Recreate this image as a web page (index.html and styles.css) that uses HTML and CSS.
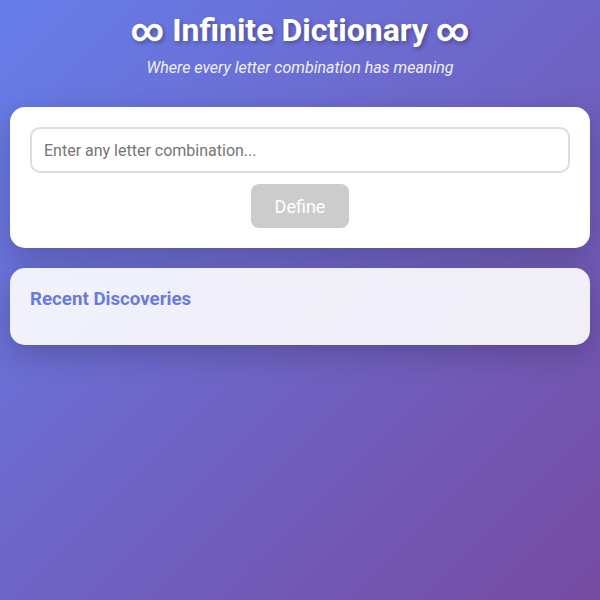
FILE: index.html
```html
<!DOCTYPE html>
<html>
<head>
<meta charset="utf-8">
<link rel="stylesheet" href="styles.css">
</head>
<body>
<div class="container">
  <header class="header">
    <h1 class="title">∞ Infinite Dictionary ∞</h1>
    <p class="subtitle">Where every letter combination has meaning</p>
  </header>
  <section class="card search-card">
    <input class="word-input" type="text" placeholder="Enter any letter combination...">
    <button class="define-btn" disabled>Define</button>
  </section>
  <section class="card recent-card">
    <h3 class="recent-title">Recent Discoveries</h3>
  </section>
</div>
</body>
</html>
```
FILE: styles.css
```css
html, body {
  margin: 0;
  height: 100%;
}
body {
  font-family: Roboto, "Liberation Sans", sans-serif;
  background: linear-gradient(135deg, #667eea 0%, #764ba2 100%);
  min-height: 600px;
  padding: 10px;
  box-sizing: border-box;
}
.container {
  display: flex;
  flex-direction: column;
}
.header {
  text-align: center;
  color: #fff;
  padding-top: 2px;
  margin-bottom: 29px;
}
.title {
  margin: 0;
  font-size: 32px;
  line-height: 37px;
  font-weight: 700;
  text-shadow: 2px 2px 4px rgba(0,0,0,0.3);
}
.subtitle {
  margin: 9px 0 0;
  font-size: 16px;
  line-height: 20px;
  font-style: italic;
  opacity: 0.9;
}
.card {
  border-radius: 15px;
  padding: 20px;
  box-shadow: 0 10px 30px rgba(0,0,0,0.2);
}
.search-card {
  background: #fff;
  display: flex;
  flex-direction: column;
  align-items: center;
  gap: 11px;
}
.word-input {
  width: 100%;
  box-sizing: border-box;
  height: 46px;
  padding: 12px;
  border: 2px solid #ddd;
  border-radius: 10px;
  font-family: Roboto, "Liberation Sans", sans-serif;
  font-size: 16px;
  color: #333;
}
.word-input::placeholder {
  color: #757575;
}
.define-btn {
  width: 98px;
  height: 44px;
  background: #ccc;
  color: #fff;
  border: none;
  border-radius: 8px;
  font-family: Roboto, "Liberation Sans", sans-serif;
  font-size: 18px;
}
.recent-card {
  margin-top: 20px;
  background: rgba(255,255,255,0.9);
  padding-bottom: 35px;
}
.recent-title {
  margin: 0;
  color: #6a7bd9;
  font-size: 18.72px;
  line-height: 22px;
  font-weight: 700;
}
```
